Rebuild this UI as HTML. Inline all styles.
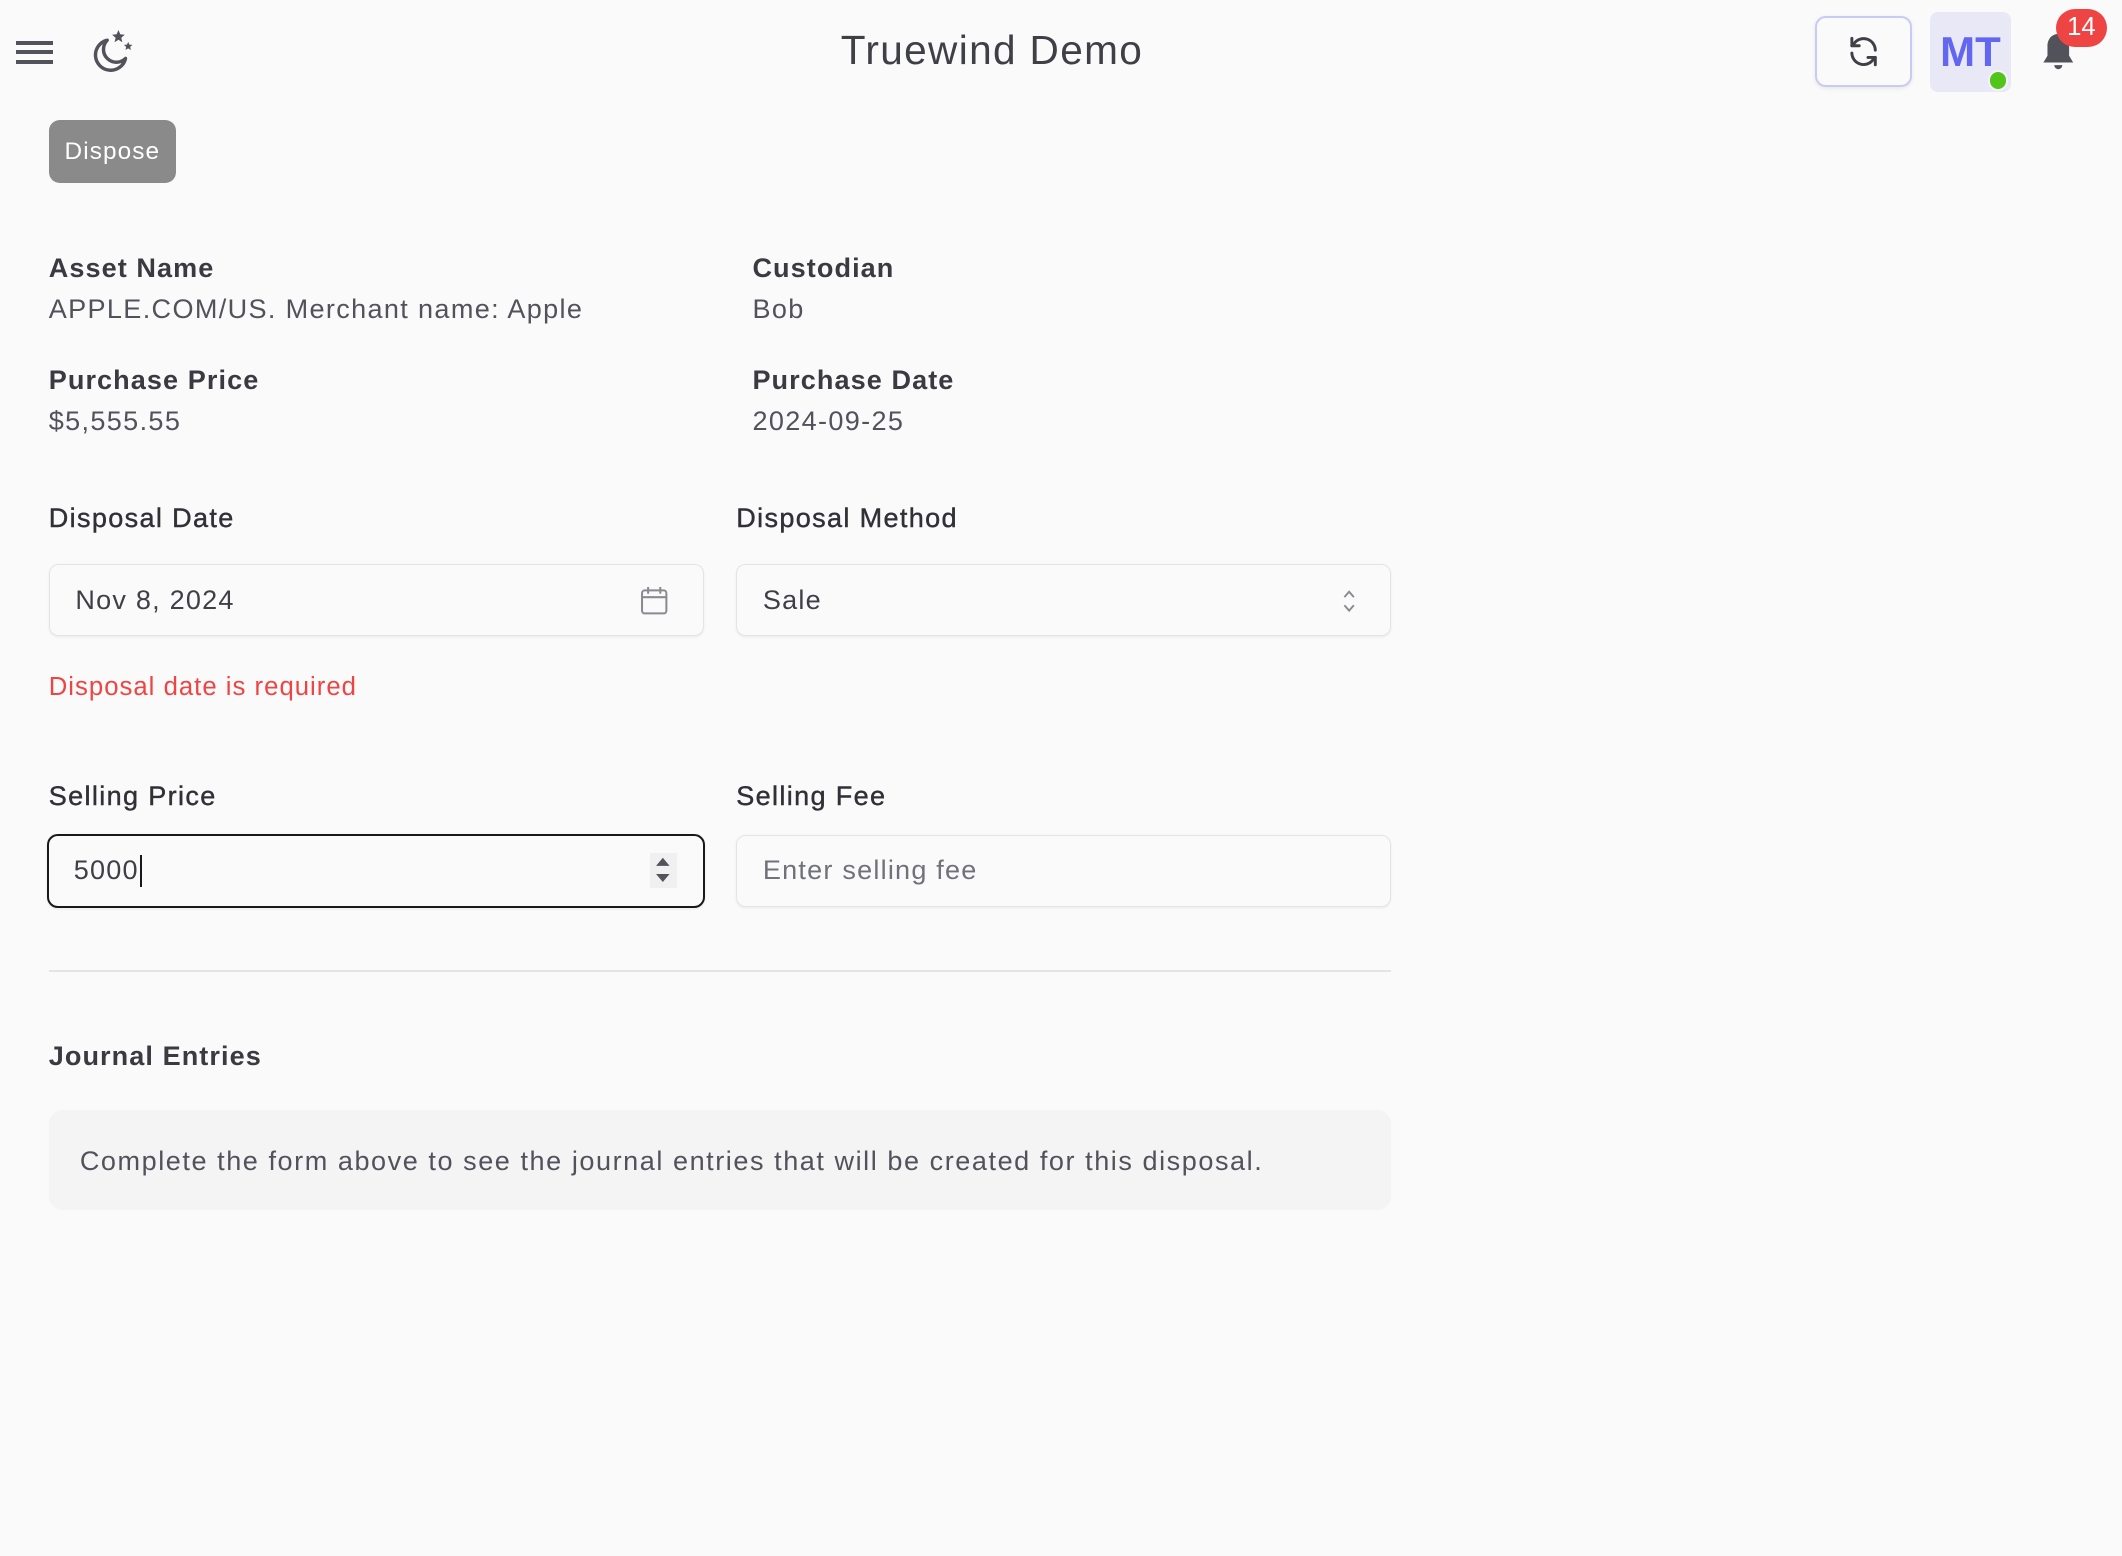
<!DOCTYPE html>
<html><head><meta charset="utf-8"><style>
html,body{margin:0;padding:0;background:#fafafa;}
body{width:1568px;height:1150px;zoom:1.35332;position:relative;overflow:hidden;font-family:"Liberation Sans",sans-serif;color:#3f3f46;}
.a{position:absolute;}
.lbl{position:absolute;font-size:20px;font-weight:bold;color:#3a3a40;letter-spacing:0.8px;}
.val{position:absolute;font-size:20px;color:#52525b;letter-spacing:1px;}
.flbl{position:absolute;font-size:20px;color:#303036;letter-spacing:1px;-webkit-text-stroke:0.3px #303036;}
.inp{position:absolute;box-sizing:border-box;border:1px solid #e4e4e7;border-radius:7px;background:#fafafa;box-shadow:0 1px 2px rgba(0,0,0,0.06);font-size:20px;color:#3f3f46;padding-left:19px;display:flex;align-items:center;letter-spacing:0.9px;}
</style></head><body>
<!-- header -->
<div class="a" style="left:12px;top:30px;width:27px;height:3px;background:#52525b"></div>
<div class="a" style="left:12px;top:37px;width:27px;height:3px;background:#52525b"></div>
<div class="a" style="left:12px;top:44px;width:27px;height:3px;background:#52525b"></div>
<svg class="a" style="left:66px;top:20px" width="36" height="36" viewBox="0 0 24 24">
<path d="M9 6.5a6 6 0 0 0 9 9 7.5 7.5 0 1 1-9-9Z" fill="none" stroke="#52525b" stroke-width="1.7" stroke-linejoin="round"/>
<path d="M14.5 1.5l.9 2.1 2.2.2-1.7 1.5.5 2.2-1.9-1.2-1.9 1.2.5-2.2-1.7-1.5 2.2-.2z" fill="#52525b"/>
<path d="M19.3 7.3l.6 1.4 1.5.1-1.1 1 .3 1.5-1.3-.8-1.3.8.3-1.5-1.1-1 1.5-.1z" fill="#52525b"/>
</svg>
<div class="a" style="left:0;width:1466px;top:20px;text-align:center;font-size:30px;color:#3f3f46;letter-spacing:1px;">Truewind Demo</div>
<div class="a" style="left:1341px;top:12px;width:72px;height:52px;box-sizing:border-box;border:1.5px solid #c9cbf7;border-radius:8px;box-shadow:0 1px 3px rgba(0,0,0,0.08);background:#fafafa"></div>
<svg class="a" style="left:1364px;top:25px" width="26" height="26" viewBox="0 0 24 24" fill="none" stroke="#3f3f46" stroke-width="2" stroke-linecap="round" stroke-linejoin="round">
<path d="M20 11a8 8 0 0 0-14.5-4.5L4 8"/><path d="M4 3v5h5"/><path d="M4 13a8 8 0 0 0 14.5 4.5L20 16"/><path d="M20 21v-5h-5"/></svg>
<div class="a" style="left:1426px;top:9px;width:60px;height:59px;background:#e8e8f7;border-radius:6px;color:#6366f1;font-weight:bold;font-size:31px;text-align:center;line-height:59px;">MT</div>
<div class="a" style="left:1469px;top:52px;width:12px;height:12px;border-radius:50%;background:#52c41a;border:2px solid #f4f4f8"></div>
<svg class="a" style="left:1506px;top:22px" width="30" height="34" viewBox="0 0 30 34"><path d="M15 3c-5 0-8 4-8 9v7l-3 5h22l-3-5v-7c0-5-3-9-8-9z" fill="#52525b"/><path d="M12 26a3 3 0 0 0 6 0z" fill="#52525b"/></svg>
<div class="a" style="left:1519px;top:7px;width:38px;height:28px;border-radius:14px;background:#ef4444;color:#fff;font-size:19px;text-align:center;line-height:28px;">14</div>
<!-- dispose -->
<div class="a" style="left:36px;top:89px;width:94px;height:46px;background:#8a8a8a;border-radius:8px;color:#fff;font-size:18px;text-align:center;line-height:48px;letter-spacing:0.8px;">Dispose</div>
<div class="lbl" style="left:36px;top:187px">Asset Name</div>
<div class="val" style="left:36px;top:217px;letter-spacing:1px">APPLE.COM/US. Merchant name: Apple</div>
<div class="lbl" style="left:556px;top:187px">Custodian</div>
<div class="val" style="left:556px;top:217px">Bob</div>
<div class="lbl" style="left:36px;top:270px">Purchase Price</div>
<div class="val" style="left:36px;top:300px">$5,555.55</div>
<div class="lbl" style="left:556px;top:270px">Purchase Date</div>
<div class="val" style="left:556px;top:300px">2024-09-25</div>
<div class="flbl" style="left:36px;top:372px">Disposal Date</div>
<div class="flbl" style="left:544px;top:372px">Disposal Method</div>
<div class="inp" style="left:36px;top:417px;width:484px;height:53px">Nov 8, 2024</div>
<svg class="a" style="left:473px;top:432px" width="21" height="23" viewBox="0 0 21 23" fill="none" stroke="#8a8a90" stroke-width="1.5"><rect x="1.5" y="4" width="18" height="17" rx="2"/><path d="M1.5 9h18M6 1.5v5M15 1.5v5"/></svg>
<div class="inp" style="left:544px;top:417px;width:484px;height:53px">Sale</div>
<svg class="a" style="left:991px;top:435px" width="12" height="18" viewBox="0 0 12 18" fill="none" stroke="#8a8a90" stroke-width="1.4"><path d="M2.5 6l3.5-4 3.5 4M2.5 12l3.5 4 3.5-4"/></svg>
<div class="a" style="left:36px;top:497px;font-size:19px;color:#ef4444;letter-spacing:0.75px;">Disposal date is required</div>
<div class="flbl" style="left:36px;top:577px">Selling Price</div>
<div class="flbl" style="left:544px;top:577px">Selling Fee</div>
<div class="inp" style="left:35px;top:616px;width:486px;height:55px;border:2px solid #18181b;border-radius:8px;padding-left:18px">5000<span style="display:inline-block;width:1.5px;height:24px;background:#18181b;margin-left:1px"></span></div>
<div class="a" style="left:480px;top:630px;width:20px;height:26px;background:#f0f0f0"></div>
<svg class="a" style="left:482px;top:632px" width="16" height="22" viewBox="0 0 16 22" fill="#52525b"><path d="M3 8l5-6 5 6z"/><path d="M3 14l5 6 5-6z"/></svg>
<div class="inp" style="left:544px;top:617px;width:484px;height:53px;color:#71717a">Enter selling fee</div>
<div class="a" style="left:36px;top:717px;width:992px;height:1px;background:#e4e4e7"></div>
<div class="lbl" style="left:36px;top:769px">Journal Entries</div>
<div class="a" style="left:36px;top:820px;width:992px;height:74px;background:#f4f4f5;border-radius:10px"></div>
<div class="val" style="left:59px;top:847px;letter-spacing:1.15px">Complete the form above to see the journal entries that will be created for this disposal.</div>
</body></html>
